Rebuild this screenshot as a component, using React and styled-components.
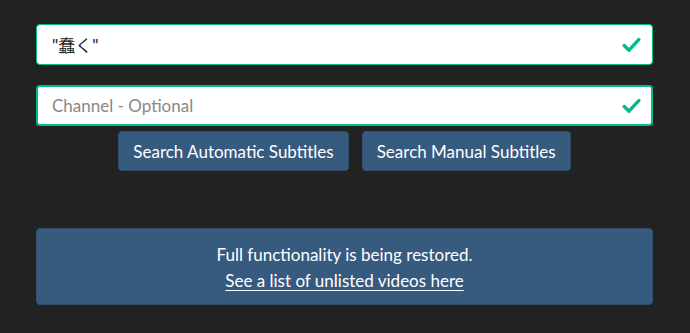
import React, { useState } from 'react';
import styled, { createGlobalStyle } from 'styled-components';

const GlobalStyle = createGlobalStyle`
  html, body {
    margin: 0;
    padding: 0;
    background: #222222;
  }
  body {
    font-family: Lato, "Noto Sans CJK JP", sans-serif;
    font-size: 17px;
    line-height: 1.5;
    color: #ffffff;
  }
`;

const Page = styled.div`
  padding: 24px 37px 28px 36px;
  display: flex;
  flex-direction: column;
`;

const Field = styled.div`
  position: relative;
  margin-bottom: ${p => p.$mb || 0}px;
`;

const Input = styled.input`
  box-sizing: border-box;
  width: 100%;
  height: 41px;
  padding: 0 44px 0 ${p => (p.$focused ? 14 : 15)}px;
  border: ${p => (p.$focused ? 2 : 1)}px solid #00bc8c;
  border-radius: 4px;
  background: #ffffff;
  color: #222222;
  font-family: Lato, "Noto Sans CJK JP", sans-serif;
  font-size: 17px;
  outline: none;

  &::placeholder {
    color: #888888;
  }
`;

const Check = styled.svg`
  position: absolute;
  right: 12px;
  top: 50%;
  transform: translateY(-50%);
  width: 19px;
  height: 16px;
`;

const ButtonRow = styled.div`
  display: flex;
  justify-content: center;
  gap: 13px;
  margin-top: 5px;
`;

const Button = styled.button`
  box-sizing: border-box;
  height: 40px;
  padding: 0 14px;
  background: #375a7f;
  border: 1px solid #2f4e6f;
  border-radius: 4px;
  color: #ffffff;
  font-family: Lato, sans-serif;
  font-size: 17px;
  cursor: pointer;
`;

const Alert = styled.div`
  margin-top: 57px;
  box-sizing: border-box;
  height: 77px;
  padding: 13px 16px;
  background: #375a7f;
  border: 1px solid #31506f;
  border-radius: 4px;
  text-align: center;
  line-height: 25.5px;
`;

const AlertLink = styled.a`
  color: #ffffff;
  text-decoration: underline;
  text-underline-offset: 3px;
`;

function CheckIcon() {
  return (
    <Check viewBox="0 0 19 16">
      <path d="M2.2 8.5 L7 13.2 L16.8 2.6" fill="none" stroke="#00bc8c" strokeWidth="3.4" strokeLinecap="round" strokeLinejoin="round" />
    </Check>
  );
}

export default function App() {
  const [query, setQuery] = useState('"蠢く"');
  const [channel, setChannel] = useState('');

  return (
    <>
      <GlobalStyle />
      <Page>
        <Field $mb={20}>
          <Input value={query} onChange={e => setQuery(e.target.value)} />
          <CheckIcon />
        </Field>
        <Field>
          <Input $focused placeholder="Channel - Optional" value={channel} onChange={e => setChannel(e.target.value)} />
          <CheckIcon />
        </Field>
        <ButtonRow>
          <Button>Search Automatic Subtitles</Button>
          <Button>Search Manual Subtitles</Button>
        </ButtonRow>
        <Alert>
          Full functionality is being restored.
          <br />
          <AlertLink href="#">See a list of unlisted videos here</AlertLink>
        </Alert>
      </Page>
    </>
  );
}
